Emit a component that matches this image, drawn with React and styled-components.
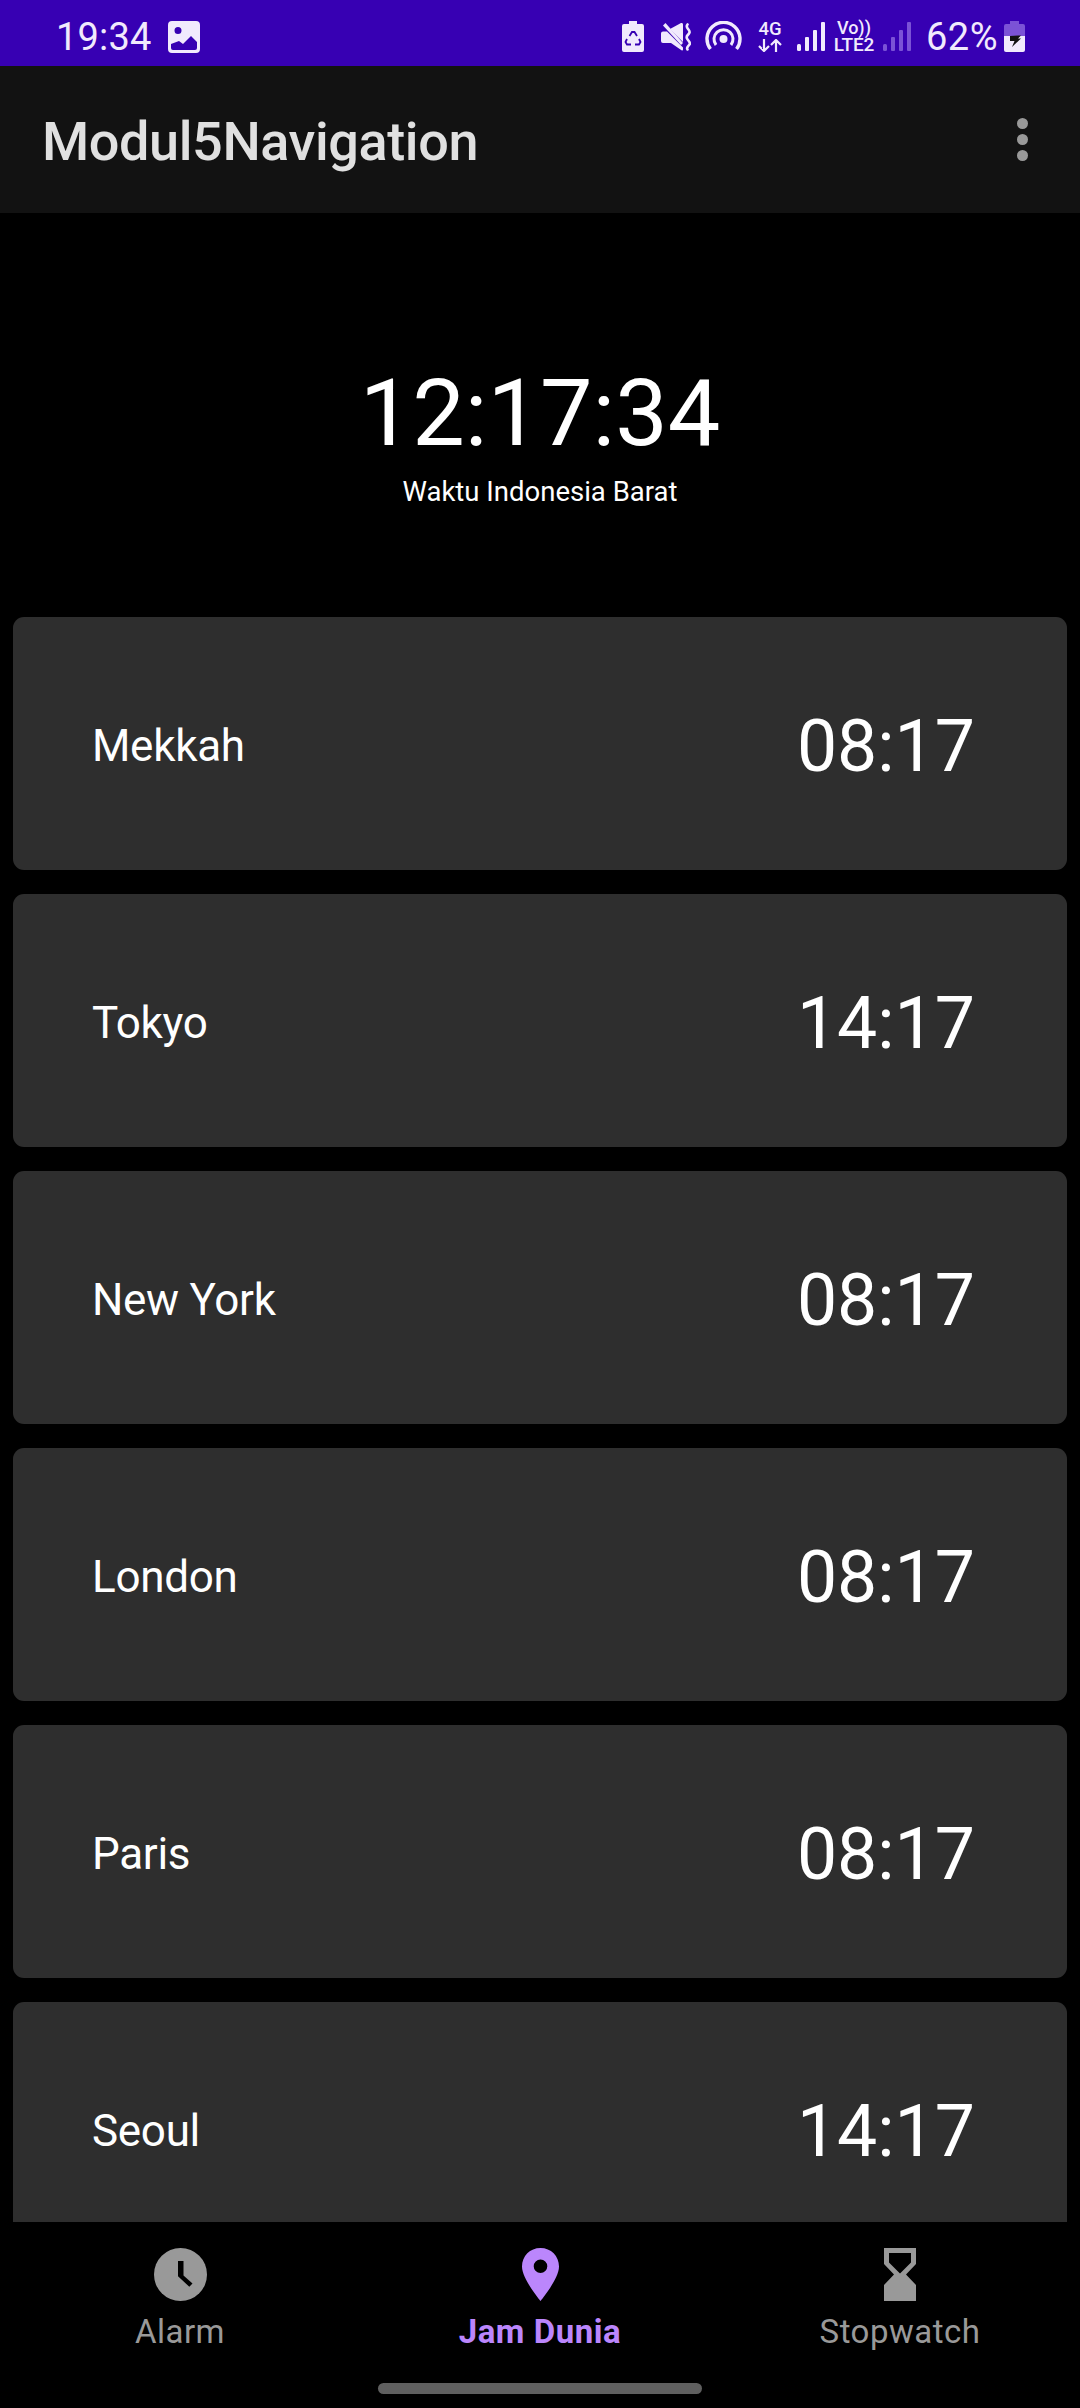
import styled, { createGlobalStyle } from "styled-components"

const cities = [
    { name: "Mekkah", time: "08:17" },
    { name: "Tokyo", time: "14:17" },
    { name: "New York", time: "08:17" },
    { name: "London", time: "08:17" },
    { name: "Paris", time: "08:17" },
    { name: "Seoul", time: "14:17" },
]

const tabs = [
    { label: "Alarm", icon: <ClockIcon /> },
    { label: "Jam Dunia", icon: <PinIcon />, active: true },
    { label: "Stopwatch", icon: <HourglassIcon /> },
]

function ClockIcon() {
    return (
        <svg width="53" height="53" viewBox="0 0 53 53">
            <circle cx="26.500" cy="26.500" r="26.500" fill="currentColor" />
            <path d="M24 13h5.500v14.500l9 8-3.200 3.200-11.300-10.500z" fill="#000" />
        </svg>
    )
}

function PinIcon() {
    return (
        <svg width="37" height="53" viewBox="0 0 37 53">
            <path fillRule="evenodd" fill="currentColor" d="M18.500 0C8 0 0 8 0 18.500 0 31 18.500 53 18.500 53S37 31 37 18.500C37 8 29 0 18.500 0zm0 11.500a6.800 6.800 0 1 1 0 13.600 6.800 6.800 0 0 1 0-13.600z" />
        </svg>
    )
}

function HourglassIcon() {
    return (
        <svg width="32" height="53" viewBox="0 0 32 53">
            <path fillRule="evenodd" fill="currentColor" d="M0 0h32v16L22 26.500 32 37v16H0V37l10-10.500L0 16zM5 5v9.500l11 11 11-11V5z" />
        </svg>
    )
}

function ImageIcon() {
    return (
        <svg width="32" height="32" viewBox="0 0 32 32">
            <path fillRule="evenodd" fill="currentColor" d="M4 0h24a4 4 0 0 1 4 4v24a4 4 0 0 1-4 4H4a4 4 0 0 1-4-4V4a4 4 0 0 1 4-4zM10 6a3.500 3.500 0 1 0 0 7 3.500 3.500 0 0 0 0-7zM3 23v4a2 2 0 0 0 2 2h22a2 2 0 0 0 2-2v-6l-6-6-8 8-4-3z" />
        </svg>
    )
}

function RecycleBatteryIcon() {
    return (
        <svg width="22" height="31" viewBox="0 0 22 31">
            <path fill="currentColor" d="M7 0h8v3h5a2 2 0 0 1 2 2v24a2 2 0 0 1-2 2H2a2 2 0 0 1-2-2V5a2 2 0 0 1 2-2h5z" />
            <path fill="none" stroke="#3700b3" strokeWidth="1.800" d="M7.500 15l2.500-4h2.500l2.500 4M17 18l1.500 3-1.500 2.500h-4M9 23.500H5L3.500 21 5 18" />
        </svg>
    )
}

function MuteIcon() {
    return (
        <svg width="30" height="28" viewBox="0 0 30 28">
            <path fill="currentColor" d="M0 10.500a2 2 0 0 1 2-2h4l16 16v2a1 1 0 0 1-1.500.800L10 20H2a2 2 0 0 1-2-2zM9 6l11-6a1.500 1.500 0 0 1 2 1.500V19z" />
            <path fill="currentColor" d="M2 2.500L4.500 0 22 20l-2 2z" />
            <path fill="none" stroke="currentColor" strokeWidth="2.600" strokeLinecap="round" d="M26.500 1.500c-3 3.500 3 5 2 8s-4 3-2.500 6 4 4 2.500 6-3.500 3-2 5" />
        </svg>
    )
}

function HotspotIcon() {
    return (
        <svg width="37" height="32" viewBox="0 0 37 32">
            <circle cx="18.500" cy="18" r="4" fill="currentColor" />
            <path fill="none" stroke="currentColor" strokeWidth="3.400" d="M5.500 28A16.500 16.500 0 1 1 31.500 28" />
            <path fill="none" stroke="currentColor" strokeWidth="3" d="M11 24A9.500 9.500 0 1 1 26 24" />
        </svg>
    )
}

function SignalIcon({ dim }) {
    return (
        <svg width="28" height="29" viewBox="0 0 28 29">
            <g fill={dim ? "#7b52d6" : "currentColor"}>
                <rect x="0" y="22" width="4" height="7" rx="1.500" />
                <rect x="8" y="15" width="4" height="14" rx="1" />
                <rect x="16" y="8" width="4" height="21" rx="1" />
                <rect x="24" y="0" width="4" height="29" rx="1" />
            </g>
        </svg>
    )
}

function ArrowsIcon() {
    return (
        <svg width="24" height="13" viewBox="0 0 24 13">
            <path fill="none" stroke="currentColor" strokeWidth="2.200" d="M6 0v12M1 7l5 5 5-5M18 13V1M13 6l5-5 5 5" />
        </svg>
    )
}

function ChargingBatteryIcon() {
    return (
        <svg width="21" height="31" viewBox="0 0 21 31">
            <path fill="#7b52d6" d="M6 0h9v3h4a2 2 0 0 1 2 2v10H0V5a2 2 0 0 1 2-2h4z" />
            <path fill="currentColor" d="M0 15h21v14a2 2 0 0 1-2 2H2a2 2 0 0 1-2-2z" />
            <path fill="#121212" d="M6 15l8-.500h3l-3 3h3L8 26l2.500-6H6z" />
        </svg>
    )
}

export default function App() {
    return (
        <>
            <GlobalStyle />
            <Screen>
                <StatusBar>
                    <StatusGroup>
                        <StatusTime>19:34</StatusTime>
                        <StatusSlot $gap={16}><ImageIcon /></StatusSlot>
                    </StatusGroup>
                    <StatusGroup>
                        <StatusSlot><RecycleBatteryIcon /></StatusSlot>
                        <StatusSlot $gap={17}><MuteIcon /></StatusSlot>
                        <StatusSlot $gap={14}><HotspotIcon /></StatusSlot>
                        <NetworkStack $gap={16}>
                            <span>4G</span>
                            <ArrowsIcon />
                        </NetworkStack>
                        <StatusSlot $gap={15}><SignalIcon /></StatusSlot>
                        <VolteStack $gap={9}>
                            <VoLabel>Vo))</VoLabel>
                            <LteLabel>LTE2</LteLabel>
                        </VolteStack>
                        <StatusSlot $gap={9}><SignalIcon dim /></StatusSlot>
                        <StatusPercent>62%</StatusPercent>
                        <StatusSlot $gap={6}><ChargingBatteryIcon /></StatusSlot>
                    </StatusGroup>
                </StatusBar>
                <AppBar>
                    <AppTitle>Modul5Navigation</AppTitle>
                    <MenuDots>
                        <i />
                        <i />
                        <i />
                    </MenuDots>
                </AppBar>
                <Content>
                    <Hero>
                        <HeroClock>12:17:34</HeroClock>
                        <HeroZone>Waktu Indonesia Barat</HeroZone>
                    </Hero>
                    <CityList>
                        {cities.map((city) => (
                            <CityCard key={city.name}>
                                <CityName>{city.name}</CityName>
                                <CityTime>{city.time}</CityTime>
                            </CityCard>
                        ))}
                    </CityList>
                </Content>
                <BottomNav>
                    <TabRow>
                        {tabs.map((tab) => (
                            <Tab key={tab.label} $active={tab.active}>
                                {tab.icon}
                                <TabLabel $active={tab.active}>{tab.label}</TabLabel>
                            </Tab>
                        ))}
                    </TabRow>
                    <HomeHandle />
                </BottomNav>
            </Screen>
        </>
    )
}

const GlobalStyle = createGlobalStyle`
    body {
        margin: 0;
        background: #000;
        font-family: "Roboto", "Liberation Sans", sans-serif;
    }
`

const Screen = styled.div`
    width: 1080px;
    height: 2408px;
    display: flex;
    flex-direction: column;
    overflow: hidden;
    background: #000;
`

const StatusBar = styled.div`
    height: 66px;
    box-sizing: border-box;
    flex: none;
    padding: 7px 55px 0 56px;
    display: flex;
    align-items: center;
    justify-content: space-between;
    background: #3700b3;
    color: #f1eafd;
`

const StatusGroup = styled.div`
    display: flex;
    align-items: center;
`

const StatusSlot = styled.div`
    display: flex;
    margin-left: ${(props) => props.$gap || 0}px;
`

const StatusTime = styled.span`
    font-size: 38px;
    line-height: 44px;
    letter-spacing: 0.2px;
`

const NetworkStack = styled.div`
    width: 24px;
    margin-left: ${(props) => props.$gap}px;
    display: flex;
    flex-direction: column;
    align-items: center;
    gap: 2px;
    font-size: 18.500px;
    line-height: 15px;
    font-weight: 500;
`

const VolteStack = styled.div`
    width: 40px;
    margin-left: ${(props) => props.$gap}px;
    display: flex;
    flex-direction: column;
    align-items: center;
    gap: 1px;
    line-height: 16px;
    font-weight: 500;
    white-space: nowrap;
`

const VoLabel = styled.span`
    font-size: 18px;
`

const LteLabel = styled.span`
    font-size: 19px;
    letter-spacing: -0.2px;
`

const StatusPercent = styled.span`
    margin-left: 15px;
    font-size: 38px;
    line-height: 44px;
    letter-spacing: 0.5px;
`

const AppBar = styled.header`
    height: 147px;
    box-sizing: border-box;
    flex: none;
    padding: 0 48px 0 42px;
    display: flex;
    align-items: center;
    justify-content: space-between;
    background: #121212;
`

const AppTitle = styled.h1`
    margin: 4px 0 0;
    font-size: 54px;
    font-weight: 500;
    letter-spacing: -0.4px;
    color: #e0e0e0;
`

const MenuDots = styled.div`
    width: 20px;
    display: flex;
    flex-direction: column;
    align-items: center;
    gap: 5px;

    i {
        width: 11px;
        height: 11px;
        border-radius: 50%;
        background: #999;
    }
`

const Content = styled.main`
    flex: 1;
    min-height: 0;
    overflow: hidden;
`

const Hero = styled.section`
    height: 404px;
    box-sizing: border-box;
    padding-top: 145px;
    display: flex;
    flex-direction: column;
    align-items: center;
    color: #fff;
`

const HeroClock = styled.div`
    font-size: 93.5px;
    line-height: 110px;
`

const HeroZone = styled.div`
    margin-top: 8px;
    font-size: 27.5px;
    line-height: 32px;
`

const CityList = styled.div`
    padding: 0 13px;
    display: flex;
    flex-direction: column;
    gap: 24px;
`

const CityCard = styled.article`
    height: 253px;
    box-sizing: border-box;
    flex: none;
    padding: 5px 92px 0 79px;
    display: flex;
    align-items: center;
    justify-content: space-between;
    border-radius: 11px;
    background: #2e2e2e;
    color: #fff;
`

const CityName = styled.div`
    font-size: 44px;
    letter-spacing: -0.3px;
`

const CityTime = styled.div`
    font-size: 71.5px;
`

const BottomNav = styled.nav`
    height: 186px;
    box-sizing: border-box;
    flex: none;
    display: flex;
    flex-direction: column;
    align-items: center;
    background: #000;
`

const TabRow = styled.div`
    width: 100%;
    padding-top: 26px;
    display: grid;
    grid-template-columns: repeat(3, 1fr);
`

const Tab = styled.div`
    display: flex;
    flex-direction: column;
    align-items: center;
    color: ${(props) => (props.$active ? "#bb86fc" : "#999")};
`

const TabLabel = styled.span`
    margin-top: 12px;
    font-size: 33px;
    line-height: 38px;
    font-weight: ${(props) => (props.$active ? 700 : 400)};
    letter-spacing: ${(props) => (props.$active ? "0.55px" : "0.5px")};
`

const HomeHandle = styled.div`
    width: 324px;
    height: 11px;
    margin-top: 32px;
    border-radius: 6px;
    background: #5f5f5f;
`
